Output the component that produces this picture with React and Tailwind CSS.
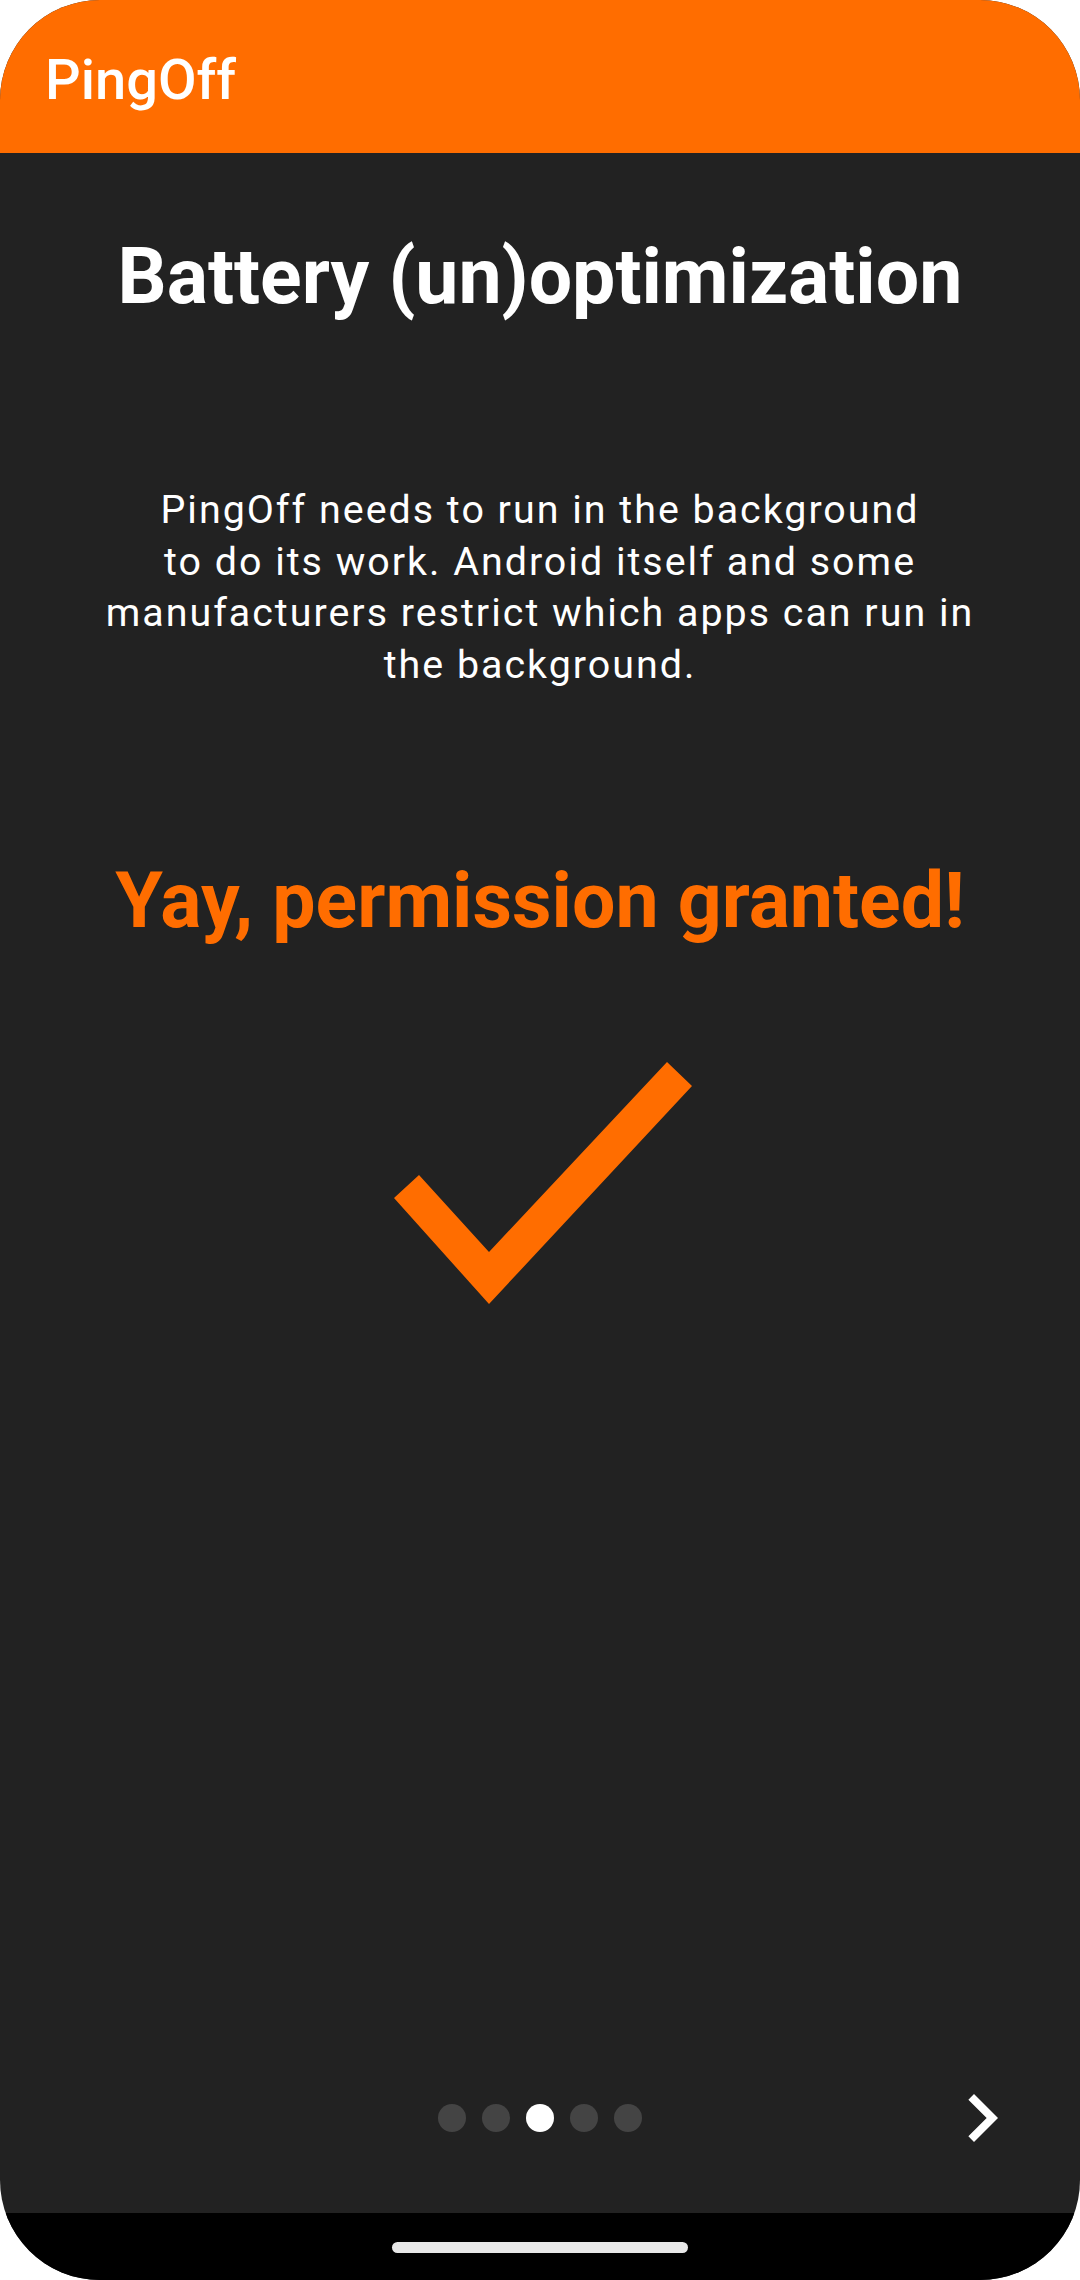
const lines = [
  'PingOff needs to run in the background',
  'to do its work. Android itself and some',
  'manufacturers restrict which apps can run in',
  'the background.',
]

function PageDots({ count, active }) {
  return (
    <div className="flex items-center gap-[16px]">
      {Array.from({ length: count }).map((_, i) => (
        <div
          key={i}
          className={`w-[28px] h-[28px] rounded-full ${i === active ? 'bg-white' : 'bg-[#444444]'}`}
        />
      ))}
    </div>
  )
}

export default function App() {
  return (
    <div className="w-[1080px] h-[2280px] bg-white" style={{ fontFamily: 'Roboto, "Noto Sans", sans-serif' }}>
      <div className="h-full flex flex-col rounded-[100px] overflow-hidden bg-[#222222]">
        <div className="h-[153px] shrink-0 bg-[#ff6d00] px-[45px] pt-[47px]">
          <div className="text-[56px] leading-[66px] font-medium text-white">PingOff</div>
        </div>

        <div className="flex-1 flex flex-col">
          <h1 className="mt-[79px] text-center text-[77px] leading-[90px] font-bold text-white">
            Battery (un)optimization
          </h1>

          <p className="mt-[162px] text-center text-[39.4px] leading-[51.7px] tracking-[2px] text-white">
            {lines.map((line, i) => (
              <span key={i} className="block">{line}</span>
            ))}
          </p>

          <div className="mt-[165px] text-center text-[77px] leading-[90px] font-bold text-[#ff6d00]">
            Yay, permission granted!
          </div>

          <div className="mt-[116px] flex justify-center pl-[6px]">
            <svg width="298" height="242" viewBox="394 1062 298 242">
              <polygon
                points="394,1198 419,1175 489,1252 667,1062 692,1086 489,1304"
                fill="#ff6d00"
              />
            </svg>
          </div>

          <div className="flex-1" />

          <div className="grid grid-cols-[1fr_auto_1fr] items-center h-[96px] mb-[47px]">
            <div />
            <PageDots count={5} active={2} />
            <div className="flex justify-end pr-[50px]">
              <svg width="96" height="96" viewBox="0 0 24 24">
                <path d="M10 6L8.59 7.41 13.17 12l-4.58 4.59L10 18l6-6z" fill="white" />
              </svg>
            </div>
          </div>
        </div>

        <div className="h-[67px] shrink-0 bg-black flex justify-center pt-[29px]">
          <div className="w-[296px] h-[11px] rounded-full bg-[#e8e8e8]" />
        </div>
      </div>
    </div>
  )
}
